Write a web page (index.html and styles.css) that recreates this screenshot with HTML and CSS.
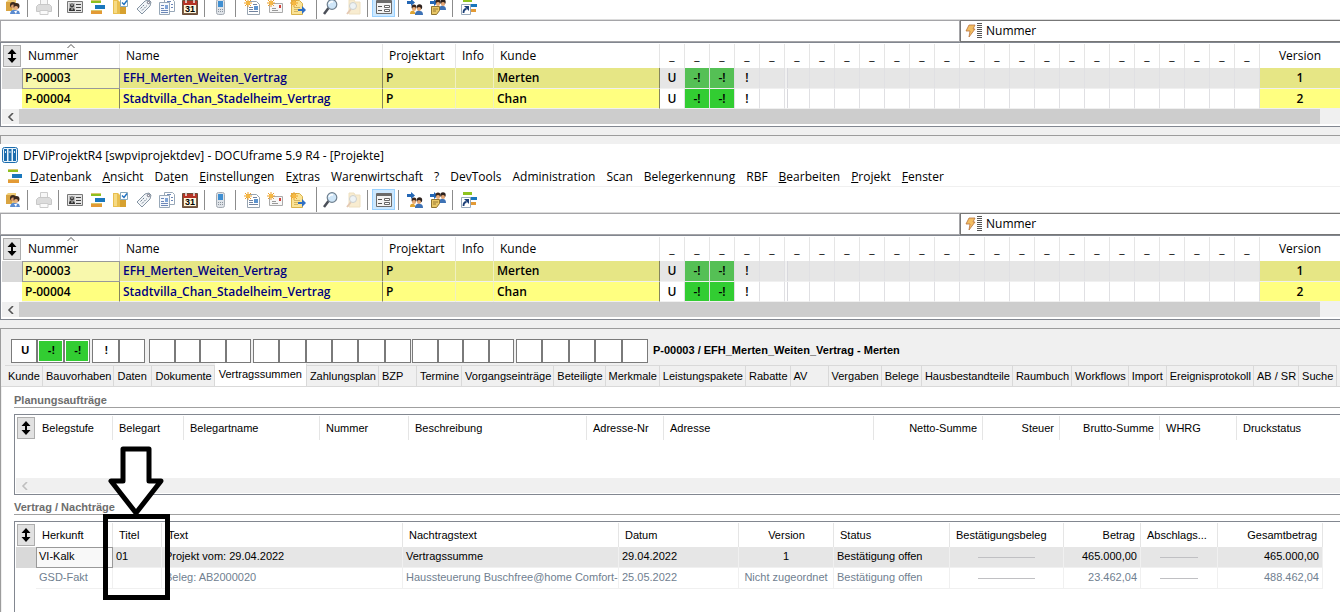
FILE: index.html
```
<!DOCTYPE html>
<html lang="de">
<head>
    <meta charset="UTF-8">
    <meta name="viewport" content="width=device-width, initial-scale=1.0">
    <title>DOCUframe 5.9 R4 - [Projekte]</title>
    <link rel="stylesheet" href="styles.css">
</head>
<body>
    <svg class="sprite" aria-hidden="true">
        <symbol id="i-user" viewBox="0 0 16 16">
            <path d="M1 3l2-2h8v10H1z" fill="#f0cd78"/>
            <path d="M1 3h6v9H1z" fill="#d9a441"/>
            <circle cx="8" cy="6" r="3" fill="#3c2a1e"/>
            <circle cx="8" cy="7.500" r="2" fill="#e0a070"/>
            <circle cx="11.500" cy="7" r="3" fill="#3c2a1e"/>
            <circle cx="11" cy="9" r="2" fill="#e8b080"/>
            <path d="M5 15q1-5 5-4l4 1 1 3H5z" fill="#5b8bd0"/>
            <path d="M9 12l2 3 1-3z" fill="#fff"/>
        </symbol>
        <symbol id="i-print" viewBox="0 0 16 16">
            <path d="M4.500.5h7v6h-7z" fill="#f7f7f7" stroke="#ccc"/>
            <path d="M.5 7.500l2-2h11l2 2v5H.5z" fill="#dcdcdc" stroke="#c8c8c8"/>
            <path d="M4 11.500h8v4H4z" fill="#fafafa" stroke="#ccc"/>
        </symbol>
        <symbol id="i-card" viewBox="0 0 16 16">
            <path d="M.5 2.500h15v11H.5z" fill="#e4e4e4" stroke="#777"/>
            <path d="M2 4h6v8H2z" fill="#bbb"/>
            <circle cx="5" cy="6.500" r="2" fill="#333"/>
            <path d="M2 12q0-4 3-3 3 0 3 3z" fill="#333"/>
            <path d="M4 6h2M5 9v2" stroke="#ddd"/>
            <path d="M9 5.500h5M9 8.500h5M9 11.500h5" stroke="#444"/>
        </symbol>
        <symbol id="i-bars" viewBox="0 0 16 16">
            <path d="M1 1h10v3H1z" fill="#8fbf1f"/>
            <path d="M5 6h10v4H5z" fill="#1977bd"/>
            <path d="M1 11h11v4H1z" fill="#e39a35"/>
            <path d="M1 1.500h10M1 11.500h11" stroke="#d9c870"/>
        </symbol>
        <symbol id="i-folder" viewBox="0 0 16 16">
            <path d="M0 1h5l2 2v12H0z" fill="#e9bf4f"/>
            <path d="M7 3h6v12H7z" fill="#d7a12f"/>
            <path d="M1 2h3v12H1z" fill="#f6da83"/>
            <path d="M7.500.5h7v7h-7z" fill="#fff" stroke="#8ab"/>
            <path d="M9 3.500l2 2 3-4" fill="none" stroke="#1b6fc0" stroke-width="1.400"/>
        </symbol>
        <symbol id="i-tag" viewBox="0 0 16 16">
            <path d="M1 10L9 2l4-1 2 2-1 4-8 8z" fill="#f2f5f8" stroke="#8594a3"/>
            <circle cx="12.500" cy="3.500" r="1.200" fill="#fff" stroke="#667"/>
            <path d="M4.500 9.500l4-4M6 11.500l5-5" stroke="#6f7f8f" stroke-dasharray="2 1"/>
        </symbol>
        <symbol id="i-docs" viewBox="0 0 16 16">
            <path d="M5.500.5h8l2 2v10h-10z" fill="#fff" stroke="#98a8b8"/>
            <path d="M.5 3.500h10v12H.5z" fill="#f6f9fc" stroke="#98a8b8"/>
            <path d="M8 2.500h4M12 5.500h2M12 8.500h2M2 6.500h3M2 9.500h3M2 11.500h7M2 13.500h7" stroke="#6c87b8"/>
            <path d="M6 6h3v4H6z" fill="#7fa4d8"/>
        </symbol>
        <symbol id="i-cal" viewBox="0 0 16 16">
            <path d="M.5 1.500h15v14H.5z" fill="#7d6048" stroke="#6b4d38"/>
            <path d="M1 2h14v4H1z" fill="#b53425"/>
            <path d="M4 0v4M12 0v4" stroke="#eee" stroke-width="1.500"/>
            <path d="M2 6h12v8H2z" fill="#fff6dc"/>
            <text x="8" y="13" class="cal-day">31</text>
        </symbol>
        <symbol id="i-phone" viewBox="0 0 16 16">
            <rect x="3.500" y=".5" width="8" height="15" rx="2" fill="#dfe3e8" stroke="#a4abb3"/>
            <rect x="5" y="2" width="5" height="6" fill="#3f8fd2"/>
            <path d="M5 10.500h5M5 12.500h5" stroke="#8b949e" stroke-dasharray="1"/>
        </symbol>
        <symbol id="i-newdoc" viewBox="0 0 16 16">
            <path d="M3.500 2.500h9l3 3v10h-12z" fill="#fff" stroke="#98a4b0"/>
            <path d="M5 8.500h4M5 10.500h4M5 12.500h9M9 5.500h4" stroke="#7183a0"/>
            <path d="M10 7h4v4h-4z" fill="#5b93cf"/>
            <path d="M4 0v8M0 4h8M1 1l6 6M7 1L1 7" stroke="#eda02c"/>
            <circle cx="4" cy="4" r="2" fill="#f6b840"/>
        </symbol>
        <symbol id="i-newmail" viewBox="0 0 16 16">
            <path d="M2.500 4.500h13v9h-13z" fill="#f7f7f7" stroke="#aaa"/>
            <path d="M5 9.500h4M5 11.500h6" stroke="#999"/>
            <path d="M12 6h2v3h-2z" fill="#d2403a"/>
            <path d="M4 0v8M0 4h8M1 1l6 6M7 1L1 7" stroke="#eda02c"/>
            <circle cx="4" cy="4" r="2" fill="#f6b840"/>
        </symbol>
        <symbol id="i-newnote" viewBox="0 0 16 16">
            <path d="M1.500 1.500h8l3 3v11h-11z" fill="#fbe396" stroke="#d9b24c"/>
            <path d="M4 8.500h6M4 10.500h4M4 12.500h4" stroke="#d5b661"/>
            <path d="M8 10h4V7l4 4-4 4v-3H8z" fill="#2f6fc4"/>
            <path d="M4 0v8M0 4h8M1 1l6 6M7 1L1 7" stroke="#eda02c"/>
            <circle cx="4" cy="4" r="2" fill="#f6b840"/>
        </symbol>
        <symbol id="i-find" viewBox="0 0 16 16">
            <path d="M6.500 9L2 15" stroke="#4b4f58" stroke-width="2.500"/>
            <circle cx="10" cy="5.500" r="4.800" fill="#cfe6f8" stroke="#70808f" stroke-width="1.200"/>
            <path d="M7 5q1-3 4-2" fill="none" stroke="#fff" stroke-width="1.400"/>
        </symbol>
        <symbol id="i-findoff" viewBox="0 0 16 16">
            <path d="M4 1h5l1 2h5v12H4z" fill="#f8ecd0" stroke="#eee0c0"/>
            <path d="M6 10l-4 5" stroke="#e4c9b4" stroke-width="2"/>
            <circle cx="8" cy="7" r="3.500" fill="#eef3f5" stroke="#cdd0cf"/>
        </symbol>
        <symbol id="i-form" viewBox="0 0 16 16">
            <path d="M.5 1.500h15v13H.5z" fill="#f3f3f3" stroke="#6a6a6a"/>
            <path d="M0 3h16" stroke="#6a6a6a" stroke-width="2"/>
            <path d="M2 7.500h4M2 11.500h4" stroke="#555"/>
            <path d="M8.500 6.500h5v2h-5zM8.500 10.500h5v2h-5z" fill="#fff" stroke="#666"/>
        </symbol>
        <symbol id="i-people" viewBox="0 0 16 16">
            <path d="M0 2h4V0l4 3.500L4 7V5H0z" fill="#2467b5"/>
            <circle cx="7" cy="8" r="2.500" fill="#3b261b"/>
            <circle cx="12.500" cy="8" r="2.700" fill="#2d211d"/>
            <circle cx="7" cy="10" r="2" fill="#e9ad78"/>
            <circle cx="12" cy="10" r="2" fill="#e4a573"/>
            <path d="M3 15q0-4 4-3l2 3z" fill="#e0a531"/>
            <path d="M8 15q1-4 5-3 3 0 3 4H8z" fill="#3e72b5"/>
        </symbol>
        <symbol id="i-peoplenote" viewBox="0 0 16 16">
            <path d="M0 2h4V0l4 3.500L4 7V5H0z" fill="#2467b5"/>
            <circle cx="8" cy="3" r="2.500" fill="#3b261b"/>
            <circle cx="13" cy="3" r="2.700" fill="#2d211d"/>
            <circle cx="8" cy="5" r="2" fill="#e9ad78"/>
            <circle cx="13" cy="5" r="2" fill="#e4a573"/>
            <path d="M9 10q1-4 4-3 3 0 3 4H9z" fill="#3e72b5"/>
            <path d="M1.500 7.500h8v4l-3 4h-5z" fill="#e9c766" stroke="#8f7430"/>
            <path d="M3 10h5M3 12h3" stroke="#9a7b32"/>
        </symbol>
        <symbol id="i-link" viewBox="0 0 16 16">
            <path d="M2 0h9v3H2z" fill="#8fc31f"/>
            <path d="M6 5h10v3H6z" fill="#1977bd"/>
            <path d="M9 10h6v3H9z" fill="#e39a35"/>
            <path d="M.5 5.500h9v10h-9z" fill="#fff" stroke="#9ab"/>
            <path d="M2.500 14q0-4 3-4" fill="none" stroke="#1b3f78" stroke-width="1.800"/>
            <path d="M3 7h5v5z" fill="#1b3f78"/>
        </symbol>
        <symbol id="i-app" viewBox="0 0 16 16">
            <rect x=".5" y=".5" width="15" height="15" rx="2" fill="#eaf4fb" stroke="#1b6cae"/>
            <path d="M2 2h3v12H2zM6.500 2h3v12h-3zM11 2h3v12h-3z" fill="#1b6cae"/>
            <path d="M3 4h1v2H3zM7.500 4h1v2h-1zM12 4h1v2h-1z" fill="#d6eaf8"/>
        </symbol>
        <symbol id="i-flash" viewBox="0 0 18 16">
            <path d="M4 2h6L8 6h2l-6 8 1-6H1z" fill="#f2bd62" stroke="#b9743c" stroke-width=".8"/>
            <path d="M12 .5h5M12 2.500h5M12 4.500h5M12 6.500h5M12 8.500h5M12 10.500h5M12 12.500h5M12 14.500h5" stroke="#555"/>
        </symbol>
        <symbol id="i-updown" viewBox="0 0 10 14">
            <path d="M5 0l4.500 5H6v4h3.500L5 14 .5 9H4V5H.5z"/>
        </symbol>
        <symbol id="i-left" viewBox="0 0 8 8">
            <path d="M6 0L2 4l4 4" fill="none" stroke="currentColor" stroke-width="1.600"/>
        </symbol>
        <symbol id="i-caret" viewBox="0 0 8 4">
            <path d="M.5 4L4 .5 7.500 4" fill="none" stroke="#555"/>
        </symbol>
    </svg>

    <template id="toolbarTemplate">
        <div class="toolbar">
            <button aria-label="Benutzer"><svg><use href="#i-user"/></svg></button>
            <span class="sep"></span>
            <button aria-label="Drucken" disabled><svg><use href="#i-print"/></svg></button>
            <span class="sep"></span>
            <button aria-label="Adressen"><svg><use href="#i-card"/></svg></button>
            <button aria-label="Projekte"><svg><use href="#i-bars"/></svg></button>
            <button aria-label="Aufgaben"><svg><use href="#i-folder"/></svg></button>
            <button aria-label="Artikel"><svg><use href="#i-tag"/></svg></button>
            <button aria-label="Dokumente"><svg><use href="#i-docs"/></svg></button>
            <button aria-label="Kalender"><svg><use href="#i-cal"/></svg></button>
            <span class="sep"></span>
            <button aria-label="Telefon"><svg><use href="#i-phone"/></svg></button>
            <span class="sep"></span>
            <button aria-label="Neues Dokument"><svg><use href="#i-newdoc"/></svg></button>
            <button aria-label="Neue Nachricht"><svg><use href="#i-newmail"/></svg></button>
            <button aria-label="Neue Notiz"><svg><use href="#i-newnote"/></svg></button>
            <span class="sep tall"></span>
            <button aria-label="Suchen"><svg><use href="#i-find"/></svg></button>
            <button aria-label="Ordner suchen" disabled><svg><use href="#i-findoff"/></svg></button>
            <span class="sep"></span>
            <button class="pressed" aria-label="Formular"><svg><use href="#i-form"/></svg></button>
            <span class="sep"></span>
            <button aria-label="Weiterleiten"><svg><use href="#i-people"/></svg></button>
            <button aria-label="Notiz weiterleiten"><svg><use href="#i-peoplenote"/></svg></button>
            <span class="sep"></span>
            <button aria-label="Verknüpfung"><svg><use href="#i-link"/></svg></button>
        </div>
    </template>

    <template id="listTemplate">
        <div class="filter">
            <input type="text" aria-label="Filter">
            <button class="filter-field"><svg><use href="#i-flash"/></svg>Nummer</button>
        </div>
        <div class="list">
            <table class="projects">
                <colgroup>
                    <col class="w-corner"><col class="w-nr"><col class="w-name"><col class="w-art"><col class="w-info"><col class="w-kunde">
                    <col class="w-flag" span="24">
                    <col>
                </colgroup>
                <thead>
                    <tr>
                        <th class="corner"><button aria-label="Sortieren"><svg><use href="#i-updown"/></svg></button></th>
                        <th class="sorted">Nummer<svg><use href="#i-caret"/></svg></th>
                        <th>Name</th>
                        <th>Projektart</th>
                        <th>Info</th>
                        <th>Kunde</th>
                        <th class="version">Version</th>
                    </tr>
                </thead>
                <tbody>
                    <tr class="selected">
                        <td class="corner"></td>
                        <td class="nr">P-00003</td>
                        <td class="name">EFH_Merten_Weiten_Vertrag</td>
                        <td class="art">P</td>
                        <td></td>
                        <td class="kunde">Merten</td>
                        <td class="version">1</td>
                    </tr>
                    <tr>
                        <td class="corner"></td>
                        <td class="nr">P-00004</td>
                        <td class="name">Stadtvilla_Chan_Stadelheim_Vertrag</td>
                        <td class="art">P</td>
                        <td></td>
                        <td class="kunde">Chan</td>
                        <td class="version">2</td>
                    </tr>
                </tbody>
            </table>
            <div class="scrollbar">
                <button aria-label="Nach links"><svg><use href="#i-left"/></svg></button>
                <span class="thumb"></span>
            </div>
        </div>
    </template>

    <section class="window-top">
        <div class="toolbar-clip" data-template="toolbarTemplate"></div>
        <div data-template="listTemplate"></div>
    </section>
    <div class="splitter"></div>

    <section class="window">
        <header class="titlebar"><svg><use href="#i-app"/></svg>DFViProjektR4 [swpviprojektdev] - DOCUframe 5.9 R4 - [Projekte]</header>
        <nav class="menu">
            <svg><use href="#i-bars"/></svg>
            <button><u>D</u>atenbank</button>
            <button><u>A</u>nsicht</button>
            <button>Da<u>t</u>en</button>
            <button><u>E</u>instellungen</button>
            <button>E<u>x</u>tras</button>
            <button>Warenwirtschaft</button>
            <button>?</button>
            <button>DevTools</button>
            <button>Administration</button>
            <button>Scan</button>
            <button>Belegerkennung</button>
            <button>RBF</button>
            <button><u>B</u>earbeiten</button>
            <button><u>P</u>rojekt</button>
            <button><u>F</u>enster</button>
        </nav>
        <div data-template="toolbarTemplate"></div>
        <div data-template="listTemplate"></div>
    </section>

    <section class="detail">
        <div class="status">
            <div class="group"><span>U</span><span class="green">-!</span><span class="green">-!</span></div>
            <div class="group"><span>!</span><span></span></div>
            <div class="group"><span></span><span></span><span></span><span></span></div>
            <div class="group"><span></span><span></span><span></span><span></span><span></span><span></span></div>
            <div class="group"><span></span><span></span><span></span><span></span></div>
            <div class="group"><span></span><span></span><span></span><span></span><span></span></div>
            <h1>P-00003 / EFH_Merten_Weiten_Vertrag - Merten</h1>
        </div>
        <div class="tabs" role="tablist">
            <button role="tab">Kunde</button>
            <button role="tab">Bauvorhaben</button>
            <button role="tab">Daten</button>
            <button role="tab">Dokumente</button>
            <button role="tab" class="active" aria-selected="true">Vertragssummen</button>
            <button role="tab">Zahlungsplan</button>
            <button role="tab">BZP</button>
            <button role="tab">Termine</button>
            <button role="tab">Vorgangseinträge</button>
            <button role="tab">Beteiligte</button>
            <button role="tab">Merkmale</button>
            <button role="tab">Leistungspakete</button>
            <button role="tab">Rabatte</button>
            <button role="tab">AV</button>
            <button role="tab">Vergaben</button>
            <button role="tab">Belege</button>
            <button role="tab">Hausbestandteile</button>
            <button role="tab">Raumbuch</button>
            <button role="tab">Workflows</button>
            <button role="tab">Import</button>
            <button role="tab">Ereignisprotokoll</button>
            <button role="tab">AB / SR</button>
            <button role="tab">Suche</button>
        </div>
        <div class="page">
            <h2>Planungsaufträge</h2>
            <div class="box orders">
                <table>
                    <colgroup>
                        <col class="w20"><col class="w77"><col class="w71"><col class="w136"><col class="w89"><col class="w178"><col class="w77">
                        <col class="w210"><col class="w109"><col class="w77"><col class="w100"><col class="w77"><col>
                    </colgroup>
                    <thead>
                        <tr>
                            <th class="corner"><button aria-label="Sortieren"><svg><use href="#i-updown"/></svg></button></th>
                            <th>Belegstufe</th>
                            <th>Belegart</th>
                            <th>Belegartname</th>
                            <th>Nummer</th>
                            <th>Beschreibung</th>
                            <th>Adresse-Nr</th>
                            <th>Adresse</th>
                            <th class="num">Netto-Summe</th>
                            <th class="num">Steuer</th>
                            <th class="num">Brutto-Summe</th>
                            <th>WHRG</th>
                            <th class="rest">Druckstatus</th>
                        </tr>
                    </thead>
                </table>
                <div class="scrollbar empty">
                    <button aria-label="Nach links" disabled><svg><use href="#i-left"/></svg></button>
                </div>
            </div>
            <h2>Vertrag / Nachträge</h2>
            <div class="box contracts">
                <table>
                    <colgroup>
                        <col class="w20"><col class="w77"><col class="w49"><col class="w241"><col class="w216"><col class="w120"><col class="w95">
                        <col class="w116"><col class="w114"><col class="w77"><col class="w77"><col class="w105"><col>
                    </colgroup>
                    <thead>
                        <tr>
                            <th class="corner"><button aria-label="Sortieren"><svg><use href="#i-updown"/></svg></button></th>
                            <th>Herkunft</th>
                            <th>Titel</th>
                            <th>Text</th>
                            <th>Nachtragstext</th>
                            <th>Datum</th>
                            <th class="mid">Version</th>
                            <th>Status</th>
                            <th>Bestätigungsbeleg</th>
                            <th class="num">Betrag</th>
                            <th>Abschlags...</th>
                            <th class="num">Gesamtbetrag</th>
                            <th class="rest"></th>
                        </tr>
                    </thead>
                    <tbody>
                        <tr class="selected">
                            <td class="corner"></td>
                            <td class="focus">VI-Kalk</td>
                            <td>01</td>
                            <td>Projekt vom: 29.04.2022</td>
                            <td>Vertragssumme</td>
                            <td>29.04.2022</td>
                            <td class="mid">1</td>
                            <td>Bestätigung offen</td>
                            <td><hr></td>
                            <td class="num">465.000,00</td>
                            <td><hr></td>
                            <td class="num">465.000,00</td>
                            <td class="rest"></td>
                        </tr>
                        <tr class="muted">
                            <td class="corner"></td>
                            <td>GSD-Fakt</td>
                            <td></td>
                            <td>Beleg: AB2000020</td>
                            <td>Haussteuerung Buschfree@home Comfort-</td>
                            <td>25.05.2022</td>
                            <td class="mid">Nicht zugeordnet</td>
                            <td>Bestätigung offen</td>
                            <td><hr></td>
                            <td class="num">23.462,04</td>
                            <td><hr></td>
                            <td class="num">488.462,04</td>
                            <td class="rest"></td>
                        </tr>
                    </tbody>
                </table>
            </div>
        </div>
    </section>

    <!-- Markierung der Spalte Titel -->
    <svg class="marker" viewBox="0 0 68 154" aria-hidden="true">
        <path d="M20 3h26v32h12L33 67 8 35h12z" fill="#fff" stroke="#000" stroke-width="5" stroke-linejoin="round"/>
        <path d="M2.500 70.500h62v81h-62z" fill="none" stroke="#000" stroke-width="5"/>
    </svg>

    <script>
        // Symbolleiste und Projektliste in beide Fenster einsetzen
        document.querySelectorAll("[data-template]").forEach(function(host) {
            const template = document.getElementById(host.dataset.template);
            host.appendChild(template.content.cloneNode(true));
        });

        // 24 Statusspalten vor der Version einfügen
        const flags = ["U", "-!", "-!", "!"];

        document.querySelectorAll(".projects tr").forEach(function(row) {
            const version = row.querySelector(".version");
            const isHead = version.tagName === "TH";

            for (let i = 0; i < 24; i++) {
                const cell = document.createElement(isHead ? "th" : "td");
                cell.className = "flag";
                cell.textContent = isHead ? "_" : (flags[i] || "");
                if (!isHead && flags[i] === "-!") {
                    cell.classList.add("green");
                }
                // Doppellinie nach der fünften Spalte
                if (!isHead && i === 5) {
                    cell.classList.add("divider");
                }
                row.insertBefore(cell, version);
            }
        });
    </script>
</body>
</html>
```
FILE: styles.css
```
* {
    box-sizing: border-box;
}
body {
    margin: 0;
    position: relative;
    min-height: 100vh;
    display: flex;
    flex-direction: column;
    overflow: hidden;
    background-color: #f0f0f0;
    color: #000;
    font-family: "Open Sans", "Noto Sans", sans-serif;
    font-size: 12px;
}
button,
input {
    margin: 0;
    padding: 0;
    border: none;
    background: none;
    color: inherit;
    font: inherit;
}
.sprite {
    display: none;
}
.cal-day {
    font-family: "Liberation Sans", sans-serif;
    font-size: 9px;
    font-weight: bold;
    text-anchor: middle;
}

/* Symbolleiste */
.toolbar-clip {
    height: 19px;
    display: flex;
    flex-direction: column;
    justify-content: flex-end;
    overflow: hidden;
    background-color: #fff;
}
.toolbar {
    flex: none;
    height: 25px;
    padding-left: 1px;
    display: flex;
    align-items: center;
    background-color: #fff;
}
.toolbar button {
    width: 23px;
    height: 21px;
    display: flex;
    align-items: center;
    justify-content: center;
}
.toolbar svg {
    width: 16px;
    height: 16px;
}
.toolbar .pressed {
    background-color: #cce8ff;
    border: 1px solid #99d1ff;
}
.sep {
    width: 8px;
    height: 20px;
    background: linear-gradient(#8c8c8c, #8c8c8c) 3px 0 / 1px 100% no-repeat;
}
.sep.tall {
    width: 9px;
    height: 25px;
    background-position: 7px 0;
}

/* Projektliste */
.filter {
    display: grid;
    grid-template-columns: 960fr 380fr;
    height: 23px;
    border-top: 1px solid #dcdcdc;
}
.filter input {
    min-width: 0;
    border: 1px solid #a5a5a8;
    background-color: #fff;
}
.filter-field {
    display: flex;
    align-items: center;
    gap: 3px;
    padding: 0 0 1px 4px;
    border: 1px solid #777;
    border-right: none;
    background-color: #fff;
}
.filter-field svg {
    width: 18px;
    height: 16px;
}
.list {
    border: 1px solid #828790;
    border-right: none;
    padding: 1px 0 2px 1px;
    background-color: #fff;
}
table {
    width: 100%;
    table-layout: fixed;
    border-collapse: separate;
    border-spacing: 0;
}
th,
td {
    padding: 0;
    text-align: left;
    white-space: nowrap;
    overflow: hidden;
}
th {
    height: 24px;
    font-weight: normal;
    border-right: 1px solid #e5e5e5;
}
th.corner {
    padding: 1px 0 1px 1px;
    border-right: none;
}
.corner button {
    width: 18px;
    height: 22px;
    display: flex;
    align-items: center;
    justify-content: center;
    background-color: #e1e1e1;
    border: 1px solid #adadad;
}
.corner svg {
    width: 10px;
    height: 14px;
}
.w-corner {
    width: 20px;
}
.w-nr {
    width: 98px;
}
.w-name {
    width: 263px;
}
.w-art {
    width: 73px;
}
.w-info {
    width: 38px;
}
.w-kunde {
    width: 166px;
}
.w-flag {
    width: 25px;
}
.projects th {
    padding: 0 0 1px 6px;
}
.projects th.corner {
    padding-left: 1px;
}
.projects th.sorted {
    position: relative;
}
.sorted svg {
    position: absolute;
    top: 0;
    left: 45px;
    width: 8px;
    height: 4px;
}
.projects td {
    height: 21px;
    padding: 0 0 1px 3px;
    font-weight: 600;
    background-color: #ffff80;
    border-right: 1px solid #f0f0c0;
    border-bottom: 1px solid #f0f0f0;
}
.projects tr:last-child td {
    height: 20px;
    padding-bottom: 0;
}
.projects .selected td {
    background-color: #e6e685;
}
.projects td.corner {
    background-color: #fff;
    border: none;
}
.projects .selected td.corner {
    background-color: #d9d9d9;
}
.projects td.nr,
.projects td.name,
.projects td.kunde {
    border-right-color: #85855c;
}
.projects .selected td.nr {
    padding: 0 0 2px 2px;
    background-color: #f8f8ac;
    border: 1px solid #999;
}
.projects td.name {
    color: #000080;
}
.projects .flag {
    padding-left: 0;
    text-align: center;
}
.projects td.flag {
    background-color: #fff;
    border-right-color: #e0e0e3;
}
.projects .selected td.flag {
    background-color: #e6e6e6;
}
.projects td.divider {
    box-shadow: inset 2px 0 #fff, inset 3px 0 #d8d8dd;
}
.projects .selected td.divider {
    box-shadow: inset 2px 0 #f0f0f0, inset 3px 0 #d8d8dd;
}
.projects td.green {
    background-color: #32cd32;
}
.projects .selected td.green {
    background-color: #55c055;
}
.projects .version {
    padding-left: 0;
    text-align: center;
    border-right: none;
}
.scrollbar {
    display: flex;
    height: 15px;
    padding-right: 20px;
    background-color: #f0f0f0;
}
.scrollbar button {
    width: 17px;
    display: flex;
    align-items: center;
    justify-content: center;
    color: #555;
}
.scrollbar svg {
    width: 8px;
    height: 8px;
}
.scrollbar .thumb {
    flex: 1;
    background-color: #cdcdcd;
}
.splitter {
    height: 9px;
    margin-top: 8px;
    border-top: 1px solid #9c9c9c;
    border-left: 1px solid #9c9c9c;
}

/* Fenster */
.titlebar {
    height: 22px;
    display: flex;
    align-items: center;
    gap: 5px;
    padding-left: 2px;
    background-color: #fff;
}
.titlebar svg {
    width: 16px;
    height: 16px;
}
.menu {
    height: 21px;
    display: flex;
    align-items: center;
    gap: 11px;
    padding-left: 7px;
    background-color: #fff;
    border-bottom: 1px solid #f0f0f0;
}
.menu svg {
    width: 16px;
    height: 16px;
    margin-right: -4px;
}

/* Projektdetails */
.detail {
    flex: 1;
    margin-top: 8px;
    display: flex;
    flex-direction: column;
    border-top: 1px solid #9c9c9c;
    border-left: 1px solid #9c9c9c;
    font-family: "Liberation Sans", Arial, sans-serif;
    font-size: 11px;
}
.status {
    display: flex;
    align-items: center;
    padding: 10px 0 0 10px;
}
.group {
    display: flex;
    width: 79px;
    height: 24px;
    margin-right: 2px;
}
.group:nth-child(2) {
    width: 53px;
    margin-right: 4px;
}
.group:nth-child(3),
.group:nth-child(5) {
    width: 102px;
}
.group:nth-child(4) {
    width: 158px;
    margin-right: 1px;
}
.group:nth-child(6) {
    width: 132px;
}
.group span {
    flex: 1;
    display: flex;
    align-items: center;
    justify-content: center;
    padding: 0 0 2px 2px;
    background-color: #fff;
    border: 1px solid #7a7a7a;
    font-weight: bold;
}
.group .green {
    background-color: #32cd32;
    box-shadow: inset 0 0 0 1px #fff;
}
.status h1 {
    margin: 0 0 0 3px;
    padding-bottom: 2px;
    font-size: 11px;
}
.tabs {
    display: flex;
    align-items: flex-end;
    height: 24px;
    padding-left: 4px;
    overflow: hidden;
    border-bottom: 1px solid #d9d9d9;
}
.tabs button {
    flex: none;
    min-width: 38px;
    height: 21px;
    padding: 0 2px 0 3px;
    text-align: left;
    border-top: 1px solid #d9d9d9;
    border-right: 1px solid #d9d9d9;
}
.tabs .active {
    height: 23px;
    padding: 0 4px 3px;
    border-top-color: #fff;
    background-color: #fff;
}
.page {
    flex: 1;
    display: flex;
    flex-direction: column;
    margin-left: 1px;
    padding: 6px 0 0 12px;
    background-color: #fff;
}
.page h2 {
    margin: 0 0 6px;
    height: 15px;
    line-height: 14px;
    font-size: 11px;
    color: #6d6d6d;
    border-bottom: 1px solid #a0a0a0;
}
.box {
    border: 1px solid #828790;
    border-right: none;
    padding: 1px 0 1px 1px;
}
.orders {
    height: 81px;
    margin-bottom: 5px;
    display: flex;
    flex-direction: column;
    justify-content: space-between;
}
.contracts {
    flex: 1;
    border-bottom: none;
}
.box th {
    padding: 0 5px 0 6px;
}
.box th.corner {
    padding: 1px 0 1px 1px;
}
.box .rest {
    border: none;
}
.contracts td {
    height: 21px;
    padding: 0 3px 2px;
    border-right: 1px solid #f0f0f0;
    border-bottom: 1px solid #f0f0f0;
}
.contracts .selected td {
    background-color: #e6e6e6;
}
.contracts .selected td.corner {
    background-color: #d9d9d9;
}
.contracts .selected td.rest {
    background-color: #fff;
}
.contracts td.corner {
    border: none;
}
.contracts .selected td.focus {
    padding: 0 2px 3px;
    background-color: #f8f8f8;
    border: 1px solid #999;
}
.contracts .muted {
    color: #708090;
}
.box .num {
    text-align: right;
}
.box .mid {
    text-align: center;
}
.contracts hr {
    width: 54%;
    margin: 2px auto 0;
    border: none;
    border-top: 1px solid #c0c0c3;
}
.scrollbar.empty button {
    color: #bfbfbf;
}
.w20 {
    width: 20px;
}
.w49 {
    width: 49px;
}
.w71 {
    width: 71px;
}
.w77 {
    width: 77px;
}
.w89 {
    width: 89px;
}
.w95 {
    width: 95px;
}
.w100 {
    width: 100px;
}
.w105 {
    width: 105px;
}
.w109 {
    width: 109px;
}
.w114 {
    width: 114px;
}
.w116 {
    width: 116px;
}
.w120 {
    width: 120px;
}
.w136 {
    width: 136px;
}
.w178 {
    width: 178px;
}
.w210 {
    width: 210px;
}
.w216 {
    width: 216px;
}
.w241 {
    width: 241px;
}

.marker {
    position: absolute;
    left: 103px;
    top: 446px;
    width: 68px;
    height: 154px;
}
```
